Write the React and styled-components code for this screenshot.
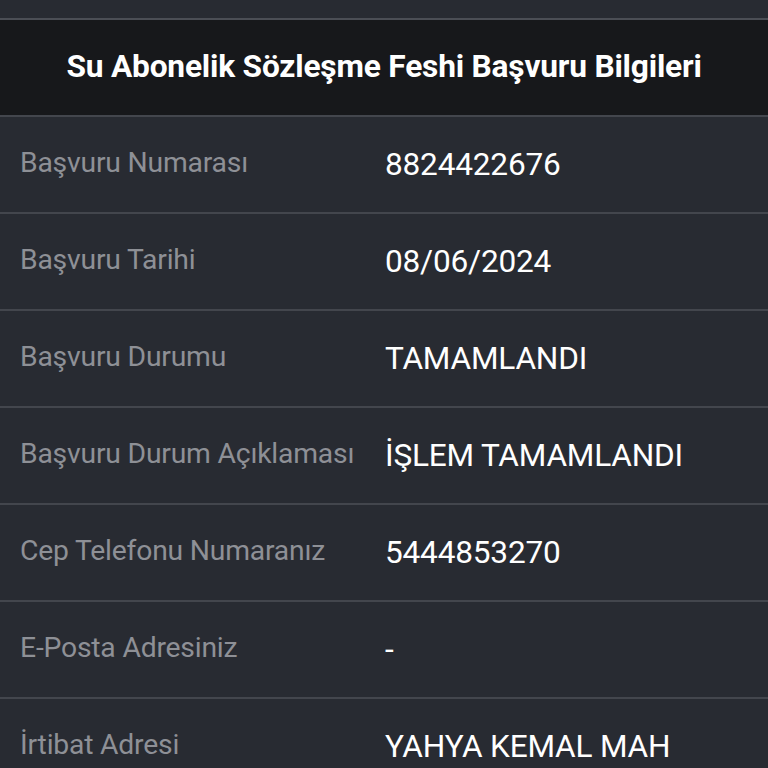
import React from "react";
import styled, { createGlobalStyle } from "styled-components";

const Global = createGlobalStyle`
  html, body { margin: 0; padding: 0; background: #282b32; }
  body { font-family: Roboto, "Noto Sans", sans-serif; }
`;

const Page = styled.div`
  width: 768px;
  height: 768px;
  overflow: hidden;
  background: #282b32;
  display: flex;
  flex-direction: column;
  & > * { flex-shrink: 0; }
`;

const TopBand = styled.div`
  height: 18px;
  background: #282b32;
  border-bottom: 2px solid #4b4e55;
`;

const Header = styled.div`
  height: 95px;
  background: #17181b;
  display: flex;
  align-items: center;
  justify-content: center;
  border-bottom: 2px solid #43464d;
`;

const Title = styled.h1`
  margin: 0;
  color: #ffffff;
  font-family: Roboto, sans-serif;
  font-weight: 700;
  font-size: 31.7px;
  letter-spacing: -0.2px;
  padding-bottom: 2px;
`;

const Row = styled.div`
  height: 95px;
  display: grid;
  grid-template-columns: 365px 1fr;
  align-items: center;
  padding-left: 20px;
  border-bottom: 2px solid #43464d;
  background: #282b32;
`;

const Label = styled.div`
  color: #8e9096;
  font-size: 28.3px;
  letter-spacing: -0.2px;
  padding-bottom: 4px;
`;

const Value = styled.div`
  color: #ffffff;
  font-size: 31.6px;
  letter-spacing: -0.2px;
`;

const rows = [
  ["Başvuru Numarası", "8824422676"],
  ["Başvuru Tarihi", "08/06/2024"],
  ["Başvuru Durumu", "TAMAMLANDI"],
  ["Başvuru Durum Açıklaması", "İŞLEM TAMAMLANDI"],
  ["Cep Telefonu Numaranız", "5444853270"],
  ["E-Posta Adresiniz", "-"],
  ["İrtibat Adresi", "YAHYA KEMAL MAH"],
];

export default function App() {
  return (
    <Page>
      <Global />
      <TopBand />
      <Header>
        <Title>Su Abonelik Sözleşme Feshi Başvuru Bilgileri</Title>
      </Header>
      {rows.map(([l, v]) => (
        <Row key={l}>
          <Label>{l}</Label>
          <Value>{v}</Value>
        </Row>
      ))}
    </Page>
  );
}
